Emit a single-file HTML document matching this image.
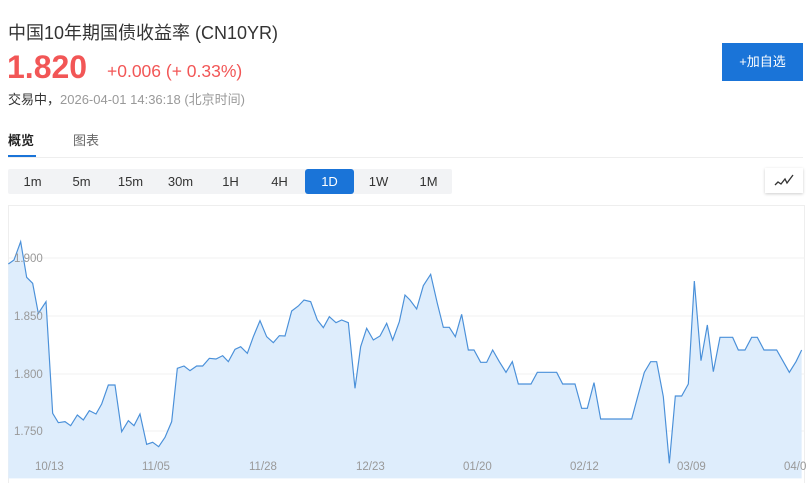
<!DOCTYPE html>
<html><head><meta charset="utf-8"><style>
*{margin:0;padding:0;box-sizing:border-box}
body{width:809px;height:483px;background:#fff;font-family:"Liberation Sans","Noto Sans CJK SC",sans-serif;position:relative;overflow:hidden;color:#333}
.a{position:absolute;white-space:nowrap}
.btns{position:absolute;left:8px;top:169px;width:444px;height:25px;background:#f2f3f5;border-radius:2px}
.b{position:absolute;top:0;width:49px;height:25px;line-height:25px;text-align:center;font-size:13px;color:#333}
.b.on{background:#1a74d8;color:#fff;border-radius:3px}
</style></head><body>
<div class="a" style="left:8px;top:19px;font-size:18px;color:#333">中国10年期国债收益率 (CN10YR)</div>
<div class="a" style="left:7px;top:49px;font-size:32px;font-weight:bold;color:#f25656">1.820</div>
<div class="a" style="left:107px;top:61px;font-size:17.5px;color:#f25656">+0.006 (+ 0.33%)</div>
<div class="a" style="left:8px;top:89px;font-size:13px;color:#333">交易中，<span style="color:#999">2026-04-01 14:36:18 (北京时间)</span></div>
<div class="a" style="left:722px;top:43px;width:81px;height:38px;background:#1a74d8;color:#fff;font-size:13px;line-height:38px;text-align:center">+加自选</div>
<div class="a" style="left:8px;top:130px;font-size:13px;font-weight:bold;color:#222">概览</div>
<div class="a" style="left:73px;top:130px;font-size:13px;color:#666">图表</div>
<div class="a" style="left:8px;top:157px;width:795px;height:1px;background:#eee"></div>
<div class="a" style="left:8px;top:155px;width:28px;height:2px;background:#1a74d8"></div>
<div class="btns">
<div class="b" style="left:0">1m</div><div class="b" style="left:49px">5m</div><div class="b" style="left:98px">15m</div><div class="b" style="left:148px">30m</div><div class="b" style="left:198px">1H</div><div class="b" style="left:247px">4H</div><div class="b on" style="left:297px">1D</div><div class="b" style="left:346px">1W</div><div class="b" style="left:396px">1M</div>
</div>
<div class="a" style="left:765px;top:168px;width:38px;height:25px;background:#fff;box-shadow:0 1px 3px rgba(0,0,0,.2)">
<svg width="38" height="25"><polyline points="10,17 13,14 16,16 20,11 22,15 28,7" fill="none" stroke="#333" stroke-width="1.3"/></svg></div>
<div class="a" style="left:8px;top:205px;width:797px;height:278px;border:1px solid #eee;border-bottom:none"></div>
<svg class="a" style="left:0;top:0" width="809" height="483">
<g stroke="#f0f0f0" stroke-width="1"><line x1="9" y1="258" x2="805" y2="258"/><line x1="9" y1="316" x2="805" y2="316"/><line x1="9" y1="374" x2="805" y2="374"/><line x1="9" y1="431" x2="805" y2="431"/></g>
<g transform="translate(0,200) scale(0.33333)">
<path d="M25,192 L42,180 62,125 80,232 98,250 115,340 138,305 158,640 175,668 195,665 212,677 232,645 250,660 268,632 288,642 305,612 325,555 345,555 365,695 385,662 402,677 420,642 440,733 458,727 476,740 495,712 515,665 532,505 552,498 570,512 590,498 608,498 628,475 648,477 668,467 685,485 705,448 722,440 742,460 760,410 780,362 800,410 820,428 838,407 855,408 875,333 895,318 912,300 932,305 952,360 970,383 988,350 1008,368 1025,360 1045,368 1065,565 1082,440 1100,385 1120,420 1140,408 1160,370 1178,420 1198,365 1215,285 1230,300 1250,327 1270,257 1292,223 1312,310 1330,382 1348,382 1366,410 1385,343 1405,450 1422,450 1442,487 1460,487 1478,450 1498,485 1518,517 1537,485 1555,552 1575,552 1593,552 1612,517 1630,517 1650,517 1670,517 1688,552 1708,552 1725,552 1745,625 1762,625 1782,548 1802,657 1820,657 1840,657 1860,657 1878,657 1895,657 1913,590 1933,517 1952,485 1970,485 1990,590 2008,790 2026,588 2045,588 2065,552 2083,243 2103,482 2122,375 2140,515 2160,412 2178,412 2198,412 2215,450 2235,450 2255,412 2272,412 2292,450 2312,450 2330,450 2350,485 2368,517 2388,485 2405,450 L2405,835 L25,835 Z" fill="#deedfc"/>
<path d="M25,192 L42,180 62,125 80,232 98,250 115,340 138,305 158,640 175,668 195,665 212,677 232,645 250,660 268,632 288,642 305,612 325,555 345,555 365,695 385,662 402,677 420,642 440,733 458,727 476,740 495,712 515,665 532,505 552,498 570,512 590,498 608,498 628,475 648,477 668,467 685,485 705,448 722,440 742,460 760,410 780,362 800,410 820,428 838,407 855,408 875,333 895,318 912,300 932,305 952,360 970,383 988,350 1008,368 1025,360 1045,368 1065,565 1082,440 1100,385 1120,420 1140,408 1160,370 1178,420 1198,365 1215,285 1230,300 1250,327 1270,257 1292,223 1312,310 1330,382 1348,382 1366,410 1385,343 1405,450 1422,450 1442,487 1460,487 1478,450 1498,485 1518,517 1537,485 1555,552 1575,552 1593,552 1612,517 1630,517 1650,517 1670,517 1688,552 1708,552 1725,552 1745,625 1762,625 1782,548 1802,657 1820,657 1840,657 1860,657 1878,657 1895,657 1913,590 1933,517 1952,485 1970,485 1990,590 2008,790 2026,588 2045,588 2065,552 2083,243 2103,482 2122,375 2140,515 2160,412 2178,412 2198,412 2215,450 2235,450 2255,412 2272,412 2292,450 2312,450 2330,450 2350,485 2368,517 2388,485 2405,450" fill="none" stroke="#4a90d9" stroke-width="3.5"/>
</g>
<g font-size="11.5" fill="#999" font-family="Liberation Sans,sans-serif">
<text x="14" y="262">1.900</text><text x="14" y="320">1.850</text><text x="14" y="378">1.800</text><text x="14" y="435">1.750</text>
<text x="35" y="470">10/13</text><text x="142" y="470">11/05</text><text x="249" y="470">11/28</text><text x="356" y="470">12/23</text><text x="463" y="470">01/20</text><text x="570" y="470">02/12</text><text x="677" y="470">03/09</text><text x="784" y="470">04/0</text>
</g>
</svg>
</body></html>
